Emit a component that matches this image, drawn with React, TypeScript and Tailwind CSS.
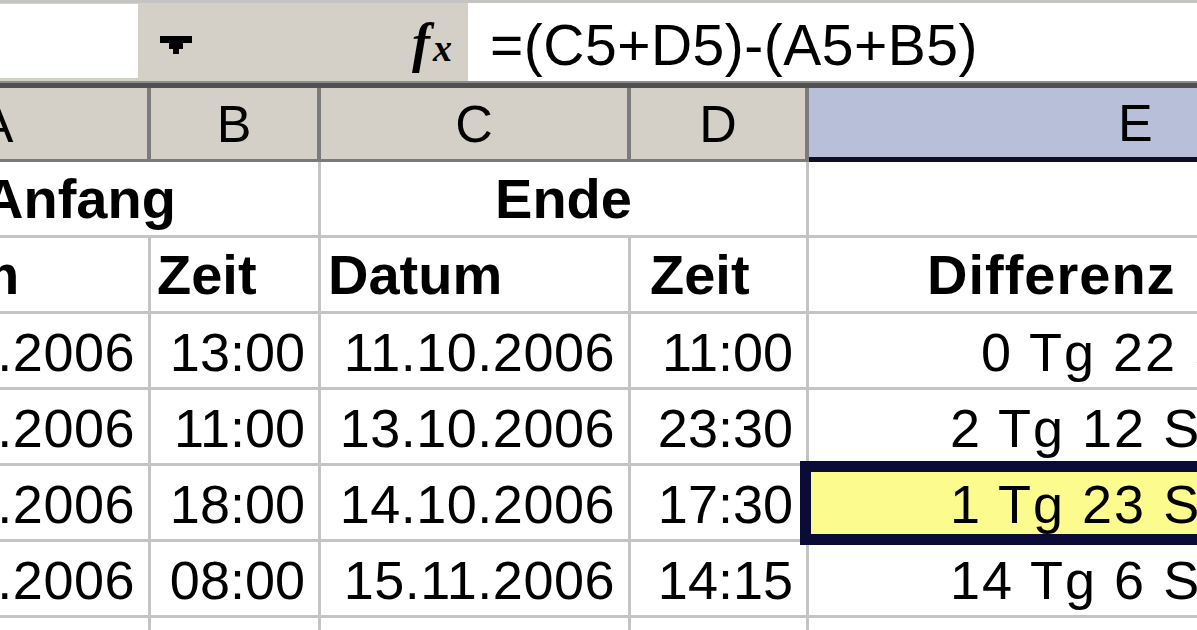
import React from "react";

type Row = { a: string; b: string; c: string; d: string; e: string; ePad: string; selected?: boolean };

const rows: Row[] = [
  { a: "10.10.2006", b: "13:00", c: "11.10.2006", d: "11:00", e: "0 Tg 22 Std", ePad: "pl-[172px]" },
  { a: "11.10.2006", b: "11:00", c: "13.10.2006", d: "23:30", e: "2 Tg 12 Std", ePad: "pl-[141px]" },
  { a: "12.10.2006", b: "18:00", c: "14.10.2006", d: "17:30", e: "1 Tg 23 Std", ePad: "pl-[141px]", selected: true },
  { a: "01.11.2006", b: "08:00", c: "15.11.2006", d: "14:15", e: "14 Tg 6 Std", ePad: "pl-[141px]" },
  { a: "", b: "", c: "", d: "", e: "", ePad: "pl-[141px]" },
];

const cols = "grid grid-cols-[306px_170px_310px_178px_648px]";
const cell = "h-[76px] border-r-[3px] border-b-[3px] border-[#c4c4c4] flex items-center whitespace-nowrap overflow-hidden";
const num = "justify-end pr-[13px] text-[54px] pt-[3px]";
const bold = "font-bold text-[56px]";

function FormulaBar() {
  return (
    <div className="flex h-[81px] bg-[#d4d0c8] border-t-[3px] border-[#c6c4c0]">
      <div className="w-[138px] pt-[1px] pb-[3px]">
        <div className="h-full bg-white" />
      </div>
      <div className="w-[330px] flex items-center">
        <svg width="32" height="18" viewBox="0 0 32 18" className="ml-[22px] mt-[6px]">
          <polygon points="0,0 32,0 32,7 23,7 23,13 19,13 19,18 13,18 13,13 9,13 9,7 0,7" fill="#000" />
        </svg>
        <span className="ml-[220px] mt-[2px] font-['Liberation_Serif'] italic font-bold text-[54px] leading-none text-black whitespace-nowrap">
          f<span className="text-[38px] ml-[3px]">x</span>
        </span>
      </div>
      <div className="flex-1 bg-white flex items-center pl-[22px] pt-[6px]">
        <span className="text-[57px] tracking-[0.5px] leading-none text-black">=(C5+D5)-(A5+B5)</span>
      </div>
    </div>
  );
}

function HeaderRow() {
  const h = "h-[74px] bg-[#d4d0c8] border-r-[4px] border-b-[3px] border-r-[#7b7b7b] border-b-[#7a7a7a] flex items-center justify-center text-[52px] text-black";
  return (
    <div className={cols}>
      <div className={h}>A</div>
      <div className={h}>B</div>
      <div className={h}>C</div>
      <div className={h}>D</div>
      <div className="h-[74px] bg-[#b7c0d8] border-b-[5px] border-[#0e0e24] flex items-center justify-start pl-[309px] text-[52px] text-black">
        E
      </div>
    </div>
  );
}

export default function App() {
  return (
    <div className="w-[1197px] h-[630px] overflow-hidden bg-white font-['Liberation_Sans',Arial,sans-serif] text-black">
      <FormulaBar />
      <div className="h-[7px] bg-[#505050] border-t-2 border-[#8c8c8c]" />
      <div className="ml-[-155px] w-[1612px]">
        <HeaderRow />

        <div className={cols}>
          <div className={`${cell} col-span-2 justify-center pr-[4px] ${bold}`}>Anfang</div>
          <div className={`${cell} col-span-2 justify-center ${bold}`}>Ende</div>
          <div className={cell} />
        </div>

        <div className={cols}>
          <div className={`${cell} pl-[0px] ${bold}`}>Datum</div>
          <div className={`${cell} pl-[6px] ${bold}`}>Zeit</div>
          <div className={`${cell} pl-[7px] ${bold}`}>Datum</div>
          <div className={`${cell} pl-[19px] ${bold}`}>Zeit</div>
          <div className={`${cell} pl-[118px] tracking-[1px] ${bold}`}>Differenz</div>
        </div>

        {rows.map((r, i) => (
          <div key={i} className={cols}>
            <div className={`${cell} ${num} tracking-[0.5px]`}>{r.a}</div>
            <div className={`${cell} ${num}`}>{r.b}</div>
            <div className={`${cell} ${num} tracking-[0.5px]`}>{r.c}</div>
            <div className={`${cell} ${num}`}>{r.d}</div>
            <div className={`${cell} ${r.ePad} pt-[3px] text-[54px] tracking-[2px] relative overflow-visible ${r.selected ? "bg-[#fcfc8e] z-10" : ""}`}>
              {r.selected && (
                <div className="absolute top-[-5px] bottom-[-6px] left-[-9px] right-[-20px] border-[11px] border-[#0b0b38]" />
              )}
              <span className="relative">{r.e}</span>
            </div>
          </div>
        ))}
      </div>
    </div>
  );
}
